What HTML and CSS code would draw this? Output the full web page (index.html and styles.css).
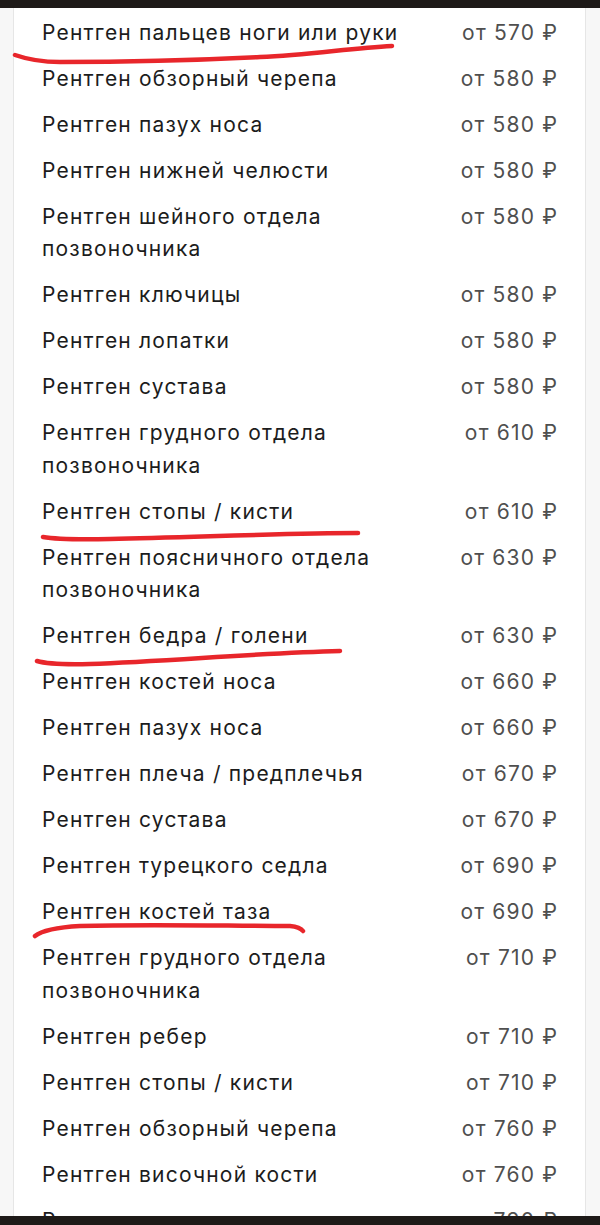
FILE: index.html
```html
<!DOCTYPE html>
<html lang="ru">
<head>
<meta charset="utf-8">
<link rel="stylesheet" href="styles.css">
</head>
<body>
<div class="statusbar"></div>
<div class="page">
  <div class="card">
    <div class="row"><span class="name">Рентген пальцев ноги или руки</span><span class="price">от 570 ₽</span></div>
    <div class="row"><span class="name">Рентген обзорный черепа</span><span class="price">от 580 ₽</span></div>
    <div class="row"><span class="name">Рентген пазух носа</span><span class="price">от 580 ₽</span></div>
    <div class="row"><span class="name">Рентген нижней челюсти</span><span class="price">от 580 ₽</span></div>
    <div class="row"><span class="name">Рентген шейного отдела позвоночника</span><span class="price">от 580 ₽</span></div>
    <div class="row"><span class="name">Рентген ключицы</span><span class="price">от 580 ₽</span></div>
    <div class="row"><span class="name">Рентген лопатки</span><span class="price">от 580 ₽</span></div>
    <div class="row"><span class="name">Рентген сустава</span><span class="price">от 580 ₽</span></div>
    <div class="row"><span class="name">Рентген грудного отдела позвоночника</span><span class="price">от 610 ₽</span></div>
    <div class="row"><span class="name">Рентген стопы / кисти</span><span class="price">от 610 ₽</span></div>
    <div class="row"><span class="name">Рентген поясничного отдела позвоночника</span><span class="price">от 630 ₽</span></div>
    <div class="row"><span class="name">Рентген бедра / голени</span><span class="price">от 630 ₽</span></div>
    <div class="row"><span class="name">Рентген костей носа</span><span class="price">от 660 ₽</span></div>
    <div class="row"><span class="name">Рентген пазух носа</span><span class="price">от 660 ₽</span></div>
    <div class="row"><span class="name">Рентген плеча / предплечья</span><span class="price">от 670 ₽</span></div>
    <div class="row"><span class="name">Рентген сустава</span><span class="price">от 670 ₽</span></div>
    <div class="row"><span class="name">Рентген турецкого седла</span><span class="price">от 690 ₽</span></div>
    <div class="row"><span class="name">Рентген костей таза</span><span class="price">от 690 ₽</span></div>
    <div class="row"><span class="name">Рентген грудного отдела позвоночника</span><span class="price">от 710 ₽</span></div>
    <div class="row"><span class="name">Рентген ребер</span><span class="price">от 710 ₽</span></div>
    <div class="row"><span class="name">Рентген стопы / кисти</span><span class="price">от 710 ₽</span></div>
    <div class="row"><span class="name">Рентген обзорный черепа</span><span class="price">от 760 ₽</span></div>
    <div class="row"><span class="name">Рентген височной кости</span><span class="price">от 760 ₽</span></div>
    <div class="row"><span class="name">Рентген грудины</span><span class="price">от 790 ₽</span></div>
  </div>
</div>
<svg class="marks" width="600" height="1225" viewBox="0 0 600 1225">
  <path d="M15 55 Q 35 62 60 62 C 120 62 200 60 260 57 C 310 55 350 48 392 46"/>
  <path d="M43 537 Q 60 540 110 539 C 200 537 290 533 358 533"/>
  <path d="M37 661 Q 50 665 90 664 C 170 661 260 653 340 651"/>
  <path d="M35 936 Q 45 928 80 926 C 150 924 230 926 290 926 Q 300 927 303 931"/>
</svg>
<div class="navbar"></div>
</body>
</html>
```

FILE: styles.css
```css
html, body {
  margin: 0;
  padding: 0;
  height: 1225px;
  overflow: hidden;
  background: #f7f7f7;
}
body {
  font-family: Inter, "Noto Sans", sans-serif;
}
.statusbar {
  height: 8px;
  background: #1e1a18;
}
.page {
  padding: 0 14px 0 13px;
}
.card {
  background: #ffffff;
  border-left: 1px solid #e6e6e6;
  border-right: 1px solid #e6e6e6;
  padding: 2px 28px 0 28px;
}
.row {
  display: grid;
  grid-template-columns: 1fr auto;
  column-gap: 20px;
  align-items: start;
  padding: 6.75px 0;
  font-size: 21px;
  line-height: 32.5px;
  letter-spacing: 1.2px;
}
.name {
  color: #1c1c1c;
  max-width: 410px;
}
.price {
  color: #4f4f4f;
  white-space: nowrap;
  text-align: right;
  margin-right: -1.2px;
}
.marks {
  position: absolute;
  top: 0;
  left: 0;
  pointer-events: none;
}
.marks path {
  fill: none;
  stroke: #e8262b;
  stroke-width: 4.5;
  stroke-linecap: round;
  stroke-linejoin: round;
}
.navbar {
  position: fixed;
  left: 0;
  right: 0;
  bottom: 0;
  height: 9px;
  background: #1e1a18;
}
```
